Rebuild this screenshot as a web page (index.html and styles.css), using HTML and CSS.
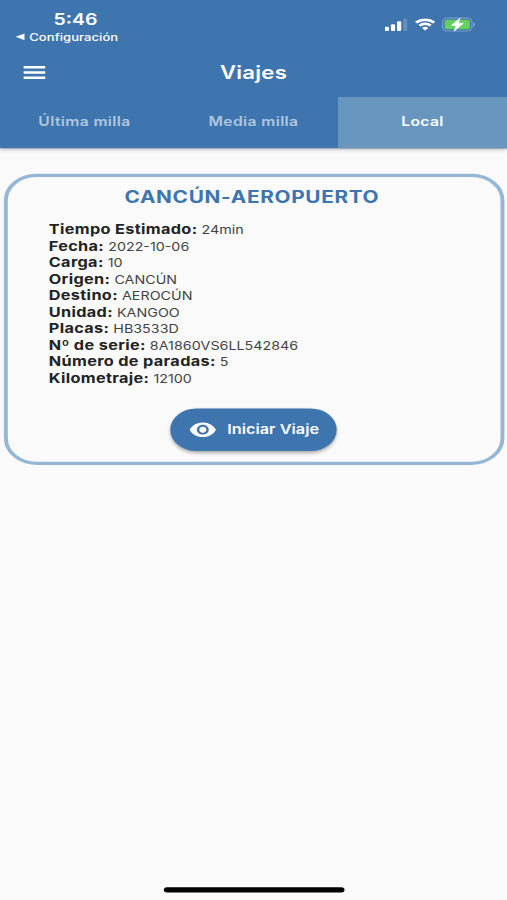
FILE: index.html
```html
<!DOCTYPE html>
<html lang="es">
<head>
    <meta charset="UTF-8">
    <meta name="viewport" content="width=device-width, initial-scale=1.0">
    <title>Viajes</title>
    <link rel="stylesheet" href="styles.css">
</head>
<body>
    <div class="screen">
        <header class="header">
            <div class="status-bar">
                <div class="status-left">
                    <div class="time">5:46</div>
                    <div class="back-app">
                        <svg width="7" height="7" viewBox="0 0 7 7"><path d="M7 0.3v6.4L0 3.5z" fill="#fff"/></svg>
                        <span>Configuración</span>
                    </div>
                </div>
                <div class="status-icons">
                    <svg width="18" height="12" viewBox="0 0 18 12" fill="#fff">
                        <rect x="0" y="8" width="3.2" height="4" rx="0.9"/>
                        <rect x="4.7" y="5.8" width="3.2" height="6.2" rx="0.9"/>
                        <rect x="9.4" y="3" width="3.2" height="9" rx="0.9"/>
                        <rect x="14.1" y="0.5" width="3.2" height="11.5" rx="0.9" opacity="0.2"/>
                    </svg>
                    <svg width="16" height="12" viewBox="0 0 16 12" fill="none" stroke="#fff" stroke-width="2.3">
                        <path d="M1 4.3a10 10 0 0 1 14 0"/>
                        <path d="M3.7 7.1a6.2 6.2 0 0 1 8.6 0"/>
                        <path d="M8 11.7L5.6 9.3a3.5 3.5 0 0 1 4.8 0z" fill="#fff" stroke="none"/>
                    </svg>
                    <svg width="26" height="14" viewBox="0 0 26 14">
                        <rect x="0.5" y="1" width="22.5" height="12" rx="3.6" fill="none" stroke="#fff" stroke-opacity="0.3"/>
                        <path d="M24.2 5v4c1.5-.6 1.5-3.4 0-4z" fill="#fff" opacity="0.4"/>
                        <rect x="2" y="2.5" width="19.5" height="9" rx="2.2" fill="#65cf66"/>
                        <path d="M14 0.8L7.2 7.9h3.7L9.4 13.3l7-7.5h-3.9z" fill="#fff" stroke="#fff" stroke-width="0.5"/>
                    </svg>
                </div>
            </div>
            <div class="app-bar">
                <button class="menu" aria-label="Menú">
                    <svg width="17" height="12" viewBox="0 0 17 12" fill="#fff"><path d="M0 0h17v2.200H0zM0 4.900h17v2.200H0zM0 9.800h17v2.200H0z"/></svg>
                </button>
                <h1>Viajes</h1>
            </div>
            <nav class="tabs">
                <div class="tab">Última milla</div>
                <div class="tab">Media milla</div>
                <div class="tab active">Local</div>
            </nav>
        </header>

        <main class="card">
            <h2>CANCÚN-AEROPUERTO</h2>
            <ul class="details">
                <li><b>Tiempo Estimado:</b> 24min</li>
                <li><b>Fecha:</b> 2022-10-06</li>
                <li><b>Carga:</b> 10</li>
                <li><b>Origen:</b> CANCÚN</li>
                <li><b>Destino:</b> AEROCÚN</li>
                <li><b>Unidad:</b> KANGOO</li>
                <li><b>Placas:</b> HB3533D</li>
                <li><b>Nº de serie:</b> 8A1860VS6LL542846</li>
                <li><b>Número de paradas:</b> 5</li>
                <li><b>Kilometraje:</b> 12100</li>
            </ul>
            <button class="start">
                <svg width="22" height="22" viewBox="0 0 24 24" fill="#fff"><path d="M12 4.500C7 4.500 2.730 7.610 1 12c1.730 4.390 6 7.500 11 7.500s9.270-3.110 11-7.500c-1.730-4.390-6-7.500-11-7.500zM12 17c-2.760 0-5-2.240-5-5s2.240-5 5-5 5 2.240 5 5-2.240 5-5 5zm0-8c-1.660 0-3 1.340-3 3s1.340 3 3 3 3-1.340 3-3-1.340-3-3-3z"/></svg>
                <span>Iniciar Viaje</span>
            </button>
        </main>

        <div class="home-indicator"></div>
    </div>
</body>
</html>
```

FILE: styles.css
```css
body {
    margin: 0;
    height: 900px;
    background-color: #fafafa;
    font-family: Inter, 'Liberation Sans', sans-serif;
}

/* 390x844 phone screen stretched to the window */
.screen {
    width: 390px;
    height: 844px;
    display: flex;
    flex-direction: column;
    transform: scale(1.3, 1.0663);
    transform-origin: 0 0;
    background-color: #fafafa;
}

.header {
    background-color: #3f75ae;
    color: #fff;
    box-shadow: 0 1px 4px rgba(0, 0, 0, 0.5);
}

.status-bar {
    height: 47px;
    display: flex;
    justify-content: space-between;
    box-sizing: border-box;
    padding: 8px 24.5px 0 12px;
}

.time {
    width: 92px;
    text-align: center;
    font-size: 15px;
    font-weight: 600;
    line-height: 19px;
}

.back-app {
    display: flex;
    align-items: center;
    gap: 3.5px;
    font-size: 10px;
    font-weight: 500;
    line-height: 15px;
    letter-spacing: 0.05px;
}

.status-icons {
    display: flex;
    align-items: center;
    gap: 5px;
    height: 29px;
}

.app-bar {
    height: 44px;
    display: grid;
    grid-template-columns: 60px 1fr 60px;
    align-items: center;
    box-sizing: border-box;
    padding-bottom: 2px;
}

.menu {
    display: flex;
    padding: 0 0 0 17.5px;
    border: none;
    background: none;
}

h1 {
    margin: 0;
    font-size: 17px;
    font-weight: 600;
    letter-spacing: 0.2px;
    text-align: center;
}

.tabs {
    display: flex;
    height: 47.5px;
}

.tab {
    flex: 1;
    display: flex;
    align-items: center;
    justify-content: center;
    box-sizing: border-box;
    padding-bottom: 3px;
    font-size: 12px;
    font-weight: 600;
    letter-spacing: 0.3px;
    color: #afc7df;
}

.tab.active {
    background-color: #6996be;
    color: #fff;
}

.card {
    display: flex;
    flex-direction: column;
    align-items: center;
    box-sizing: border-box;
    height: 273px;
    margin: 24.5px 2px 0 2.5px;
    border: 3px solid #94b7d6;
    border-radius: 25px;
}

h2 {
    margin: 8px 3px 13px 0;
    font-size: 16px;
    line-height: 20px;
    font-weight: 700;
    letter-spacing: 0.5px;
    color: #3f75ae;
}

.details {
    align-self: stretch;
    margin: 0;
    padding: 0 0 0 32px;
    list-style: none;
    font-size: 11px;
    line-height: 15.5px;
    color: #444;
}

.details li {
    height: 15.5px;
}

.details b {
    font-size: 12.5px;
    letter-spacing: 0.27px;
    color: #222;
}

.start {
    display: flex;
    align-items: center;
    gap: 7.5px;
    width: 128px;
    height: 40px;
    margin-top: 20.5px;
    padding: 0 0 0 14px;
    border: none;
    border-radius: 20px;
    background-color: #3f75ae;
    color: #fff;
    font-family: inherit;
    font-size: 12.5px;
    font-weight: 600;
    letter-spacing: 0.02px;
    white-space: nowrap;
    box-shadow: 0 2px 3px rgba(0, 0, 0, 0.3);
}

.home-indicator {
    width: 139px;
    height: 5px;
    margin: auto auto 7px;
    border-radius: 3px;
    background-color: #000;
}
```
